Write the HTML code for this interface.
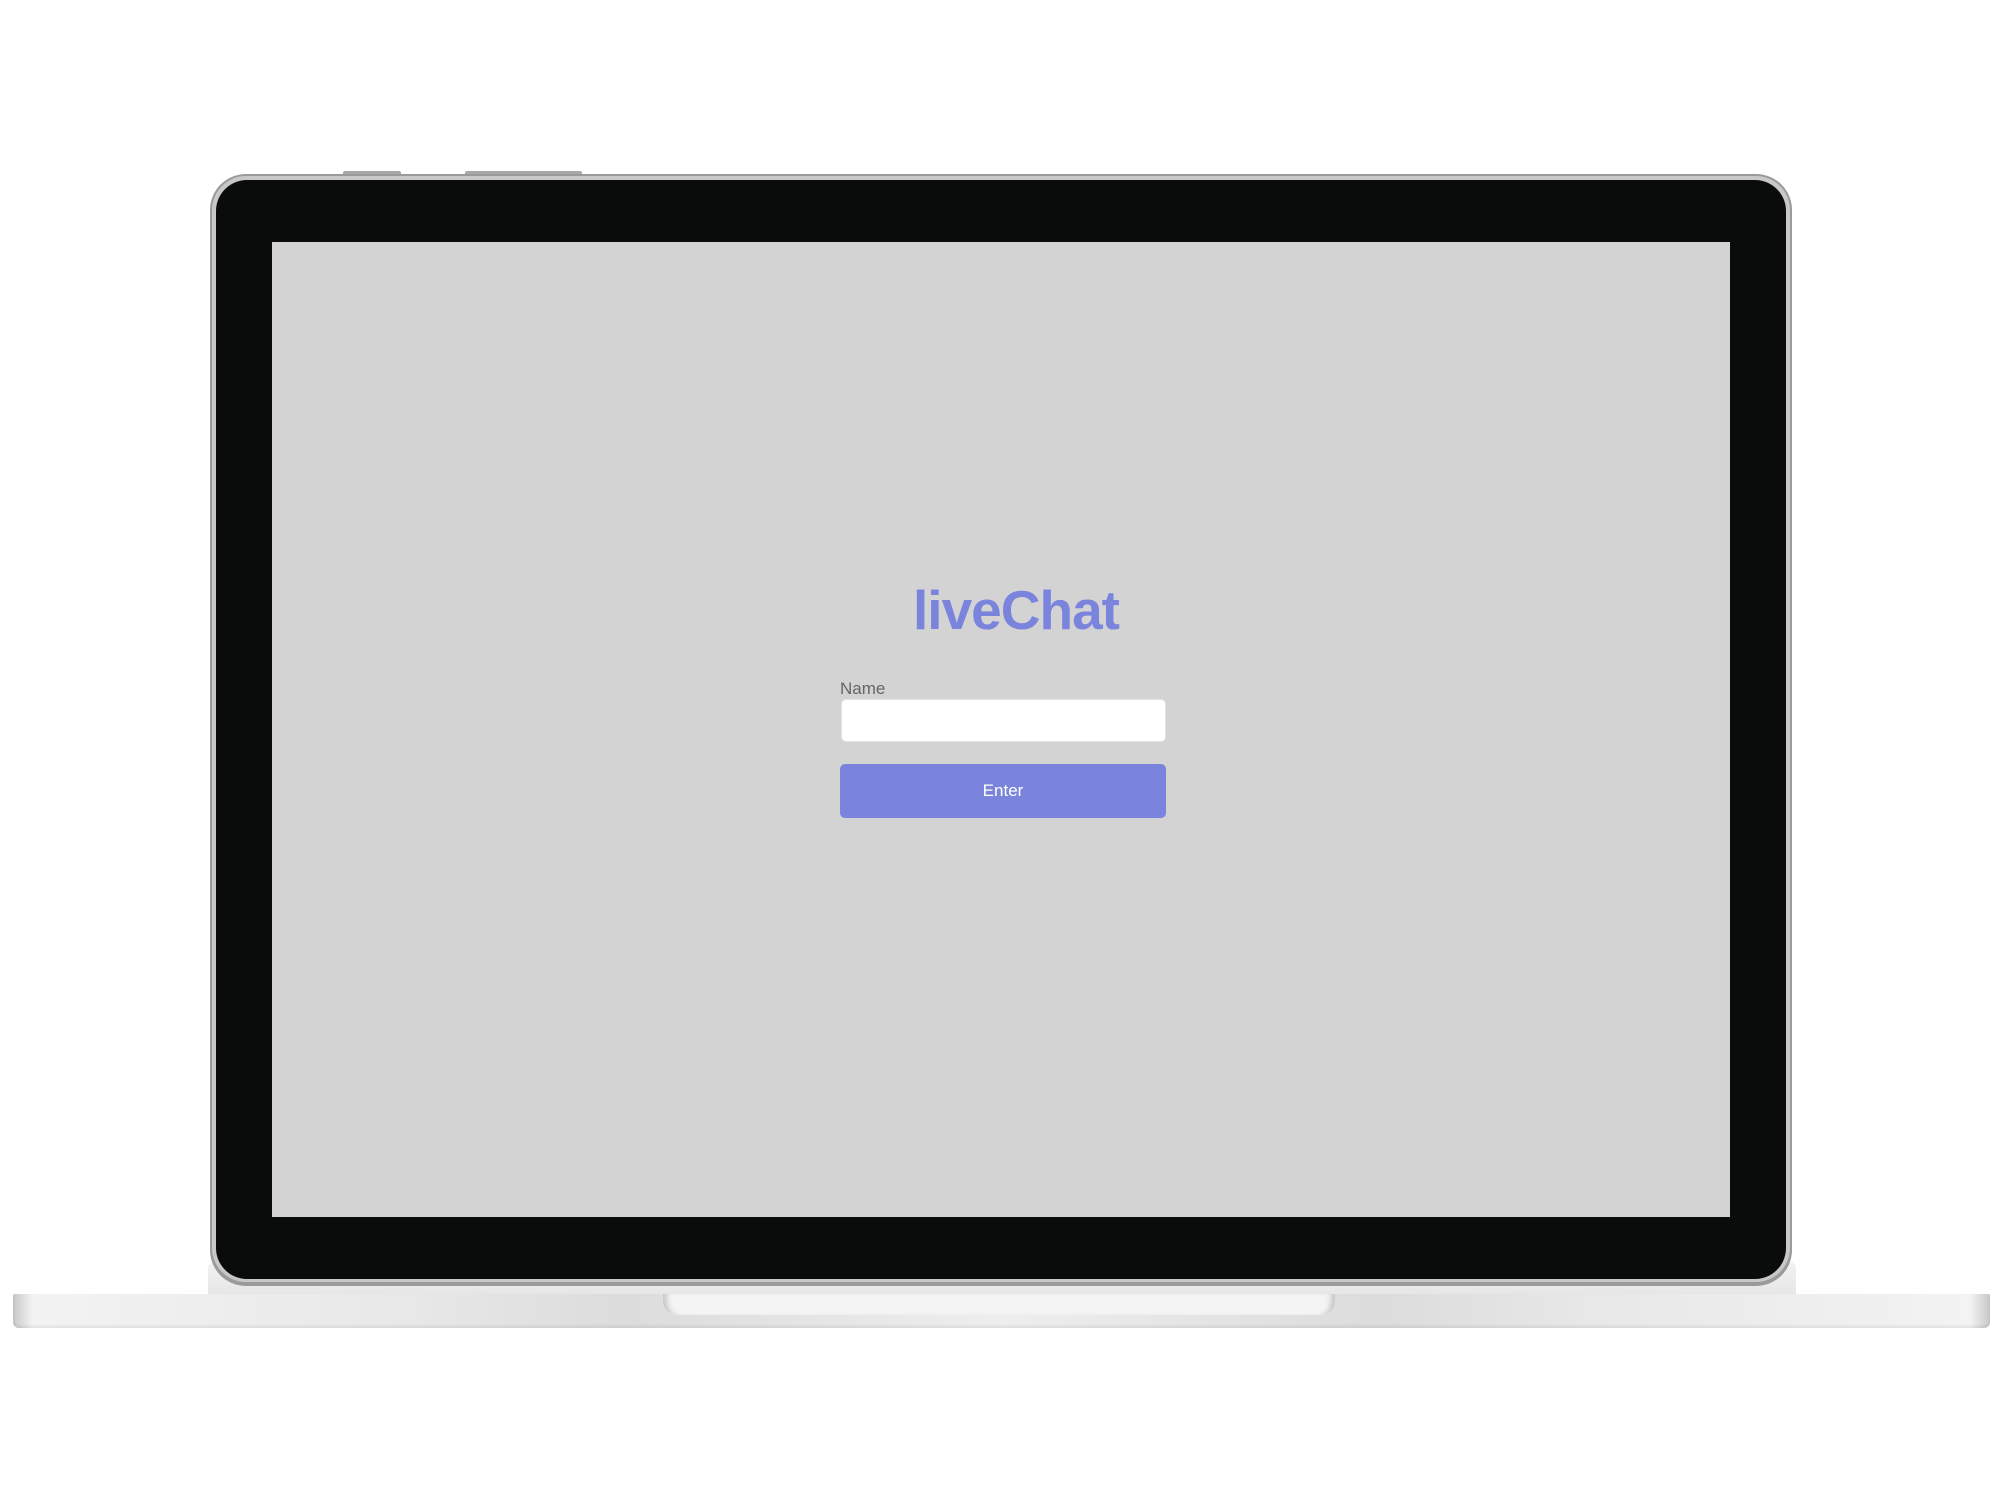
<!DOCTYPE html>
<html><head><style>
body{margin:0;width:2000px;height:1500px;background:#fff;position:relative;overflow:hidden;font-family:"Liberation Sans",sans-serif}
div{position:absolute;box-sizing:border-box}
</style></head><body>
<div style="left:343px;top:171px;width:58px;height:5px;background:#a8a8a8;border-radius:2px 2px 0 0"></div>
<div style="left:465px;top:171px;width:117px;height:5px;background:#a8a8a8;border-radius:2px 2px 0 0"></div>
<div style="left:208px;top:1262px;width:1588px;height:33px;background:linear-gradient(#f2f2f2,#e6e6e6);border-radius:6px 6px 0 0"></div>
<div style="left:210px;top:174px;width:1582px;height:1112px;background:#9a9a9a;border-radius:36px"></div>
<div style="left:212px;top:176px;width:1578px;height:1106px;background:#c8c8c8;border-radius:34px"></div>
<div style="left:216px;top:180px;width:1570px;height:1099px;background:#0a0c0b;border-radius:31px"></div>
<div style="left:272px;top:242px;width:1458px;height:975px;background:#d3d3d3"></div>
<div style="left:13px;top:1294px;width:1977px;height:34px;background:linear-gradient(90deg,#c8c8c8 0%,#f3f3f3 1%,#e8e8e8 20%,#dcdcdc 31%,#eeeeee 50%,#dcdcdc 69%,#e8e8e8 80%,#f3f3f3 99%,#c8c8c8 100%);border-radius:2px 2px 6px 6px;box-shadow:inset 0 -2px 3px rgba(0,0,0,.08)"></div>
<div style="left:663px;top:1294px;width:672px;height:21px;background:#f4f4f4;border-radius:0 0 14px 14px;box-shadow:inset 8px 0 6px -4px #c6c6c6,inset -8px 0 6px -4px #c6c6c6"></div>
<div style="left:840px;top:580px;width:326px;text-align:center;font-size:55px;font-weight:600;color:#7b84dc;line-height:60px;padding-left:26px;letter-spacing:-1px">liveChat</div>
<div style="left:840px;top:679px;font-size:17px;color:#666">Name</div>
<div style="left:841px;top:699px;width:325px;height:43px;background:#fff;border-radius:5px;border:1px solid #e4e4e4"></div>
<div style="left:840px;top:764px;width:326px;height:54px;background:#7b84dc;border-radius:5px;color:#fff;font-size:17px;line-height:54px;text-align:center">Enter</div>
</body></html>
